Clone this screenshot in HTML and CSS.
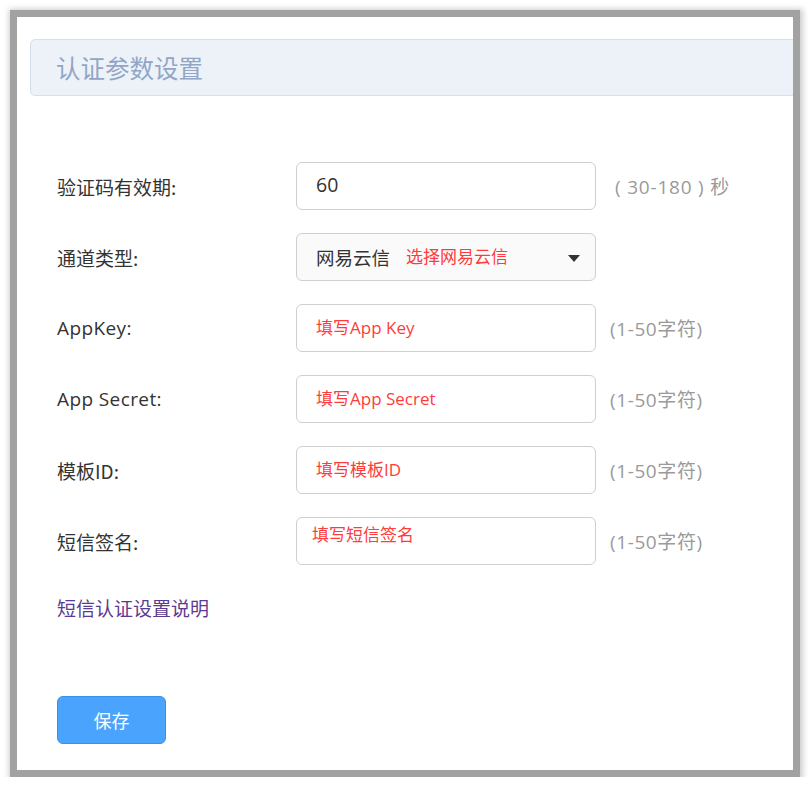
FILE: index.html
```
<!DOCTYPE html>
<html lang="zh-CN">
<head>
    <meta charset="UTF-8">
    <meta name="viewport" content="width=device-width, initial-scale=1.0">
    <title>认证参数设置</title>
    <link rel="stylesheet" href="styles.css">
</head>
<body>
    <div class="frame">
        <div class="panel-title">认证参数设置</div>

        <div class="form">
            <div class="row">
                <label class="label">验证码有效期:</label>
                <div class="field"><span class="value">60</span></div>
                <span class="hint hint-wide">( 30-180 ) 秒</span>
            </div>
            <div class="row">
                <label class="label">通道类型:</label>
                <div class="field select">
                    <span class="value">网易云信</span>
                    <span class="note note-inline">选择网易云信</span>
                    <span class="caret"></span>
                </div>
            </div>
            <div class="row">
                <label class="label latin">AppKey:</label>
                <div class="field"><span class="note">填写App Key</span></div>
                <span class="hint">(1-50字符)</span>
            </div>
            <div class="row">
                <label class="label latin">App Secret:</label>
                <div class="field"><span class="note">填写App Secret</span></div>
                <span class="hint">(1-50字符)</span>
            </div>
            <div class="row">
                <label class="label">模板ID:</label>
                <div class="field"><span class="note">填写模板ID</span></div>
                <span class="hint">(1-50字符)</span>
            </div>
            <div class="row">
                <label class="label">短信签名:</label>
                <div class="field"><span class="note note-high">填写短信签名</span></div>
                <span class="hint">(1-50字符)</span>
            </div>

            <a href="#" class="help-link">短信认证设置说明</a>

            <button class="save-btn">保存</button>
        </div>
    </div>
</body>
</html>
```

FILE: styles.css
```
body {
    margin: 0;
    padding: 0;
    background: #fff;
    font-family: "Open Sans", "Noto Sans CJK SC", sans-serif;
    color: #333;
}

.frame {
    margin: 10px 0 0 10px;
    width: 776px;
    height: 753px;
    border: 7px solid #a2a2a2;
    box-shadow: 1px 1px 6px 2px rgba(0, 0, 0, 0.2);
    background: #fff;
    overflow: hidden;
}

.panel-title {
    margin: 22px 0 0 13px;
    width: 800px;
    height: 55px;
    line-height: 55px;
    padding-left: 25px;
    background: #edf2f9;
    border: 1px solid #d5e0ef;
    border-radius: 5px;
    font-family: "Noto Sans CJK SC", sans-serif;
    font-size: 24.5px;
    color: #91a6c6;
}

.form {
    padding: 66px 0 0 40px;
}

.row {
    display: flex;
    align-items: center;
    height: 48px;
    margin-bottom: 23px;
}

.label {
    width: 239px;
    font-family: "Noto Sans CJK SC", sans-serif;
    font-size: 19px;
    color: #333;
}

.label.latin {
    font-family: "Open Sans", "Noto Sans CJK SC", sans-serif;
    font-size: 19px;
    letter-spacing: 0.4px;
}

.field {
    box-sizing: border-box;
    width: 300px;
    height: 48px;
    border: 1px solid #cfcfcf;
    border-radius: 6px;
    background: #fff;
    display: flex;
    align-items: center;
    padding: 0 18px 4px 19px;
    position: relative;
}

.field.select {
    background: #fafafa;
    padding-bottom: 0;
}

.value {
    font-size: 19.5px;
    color: #333;
    font-family: "Open Sans", "Noto Sans CJK SC", sans-serif;
}

.select .value {
    font-family: "Noto Sans CJK SC", sans-serif;
    font-size: 18.5px;
}

.note {
    font-family: "Open Sans", "Noto Sans CJK SC", sans-serif;
    font-size: 17px;
    color: #ff3c3c;
}

.note-inline {
    margin-left: 16px;
    margin-bottom: 4px;
}

.note-high {
    margin-bottom: 12px;
    margin-left: -4px;
}

.caret {
    position: absolute;
    right: 15px;
    top: 21px;
    width: 0;
    height: 0;
    border-left: 6px solid transparent;
    border-right: 6px solid transparent;
    border-top: 7px solid #333;
}

.hint {
    margin-left: 14px;
    font-size: 19px;
    letter-spacing: 0.6px;
    color: #9a9a9a;
}

.hint-wide {
    margin-left: 19px;
    font-size: 19px;
    letter-spacing: 0.8px;
}

.help-link {
    display: block;
    margin-top: 29px;
    font-family: "Noto Sans CJK SC", sans-serif;
    font-size: 19px;
    color: #5b3b8f;
    text-decoration: none;
}

.save-btn {
    display: block;
    margin-top: 75px;
    width: 109px;
    height: 48px;
    background: #4aa3fc;
    border: 1px solid #3c8fe3;
    border-radius: 6px;
    color: #fff;
    font-family: "Noto Sans CJK SC", sans-serif;
    font-size: 18px;
    cursor: pointer;
}
```
